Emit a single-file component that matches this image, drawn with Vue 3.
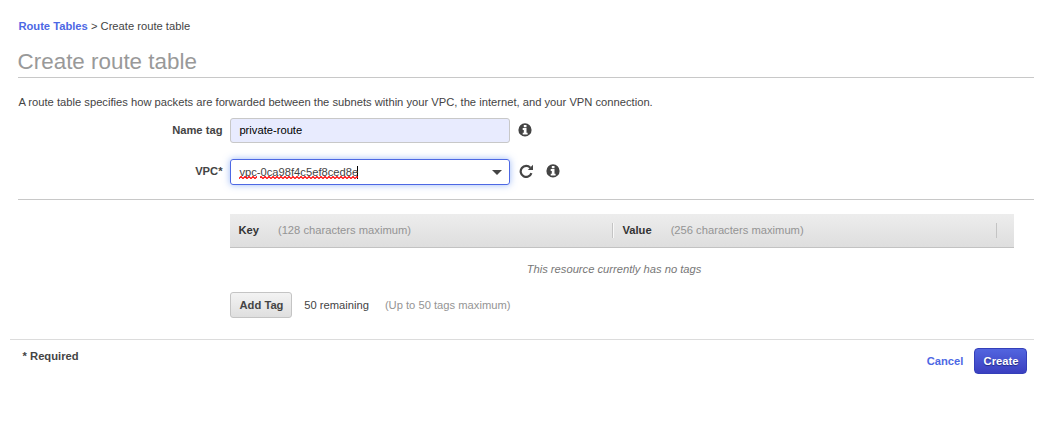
<script setup>
const columns = [
  { name: 'Key', hint: '(128 characters maximum)' },
  { name: 'Value', hint: '(256 characters maximum)' },
]
const infoPath =
  'M7 0.3A6.6 6.6 0 1 0 7 13.5A6.6 6.6 0 1 0 7 0.3ZM5.8 2h2.7v2.2H5.8zM4.7 5.1h3.8v4.6h1.1v1.8H4.7V9.7h1.1V6.9H4.7z'
</script>

<template>
  <main class="page">
    <nav class="crumbs"><a class="link">Route Tables</a> &gt; Create route table</nav>
    <h1 class="title">Create route table</h1>
    <p class="intro">
      A route table specifies how packets are forwarded between the subnets within your VPC, the
      internet, and your VPN connection.
    </p>

    <div class="row name-row">
      <label class="label">Name tag</label>
      <div class="field filled">private-route</div>
      <svg class="icon" viewBox="0 0 14 14"><path :d="infoPath" fill-rule="evenodd" /></svg>
    </div>
    <div class="row vpc-row">
      <label class="label">VPC*</label>
      <div class="field focused">
        <span class="typed">
          vpc-0ca98f4c5ef8ced8e
          <svg class="squiggle" width="119" height="3" viewBox="0 0 119 3">
            <defs>
              <pattern id="wave" width="4" height="3" patternUnits="userSpaceOnUse">
                <path d="M-1 1.5L0 2.5L2 0.5L4 2.5L5 1.5" />
              </pattern>
            </defs>
            <rect width="18" height="3" fill="url(#wave)" />
            <rect x="21" width="98" height="3" fill="url(#wave)" />
          </svg>
        </span>
        <i class="caret"></i>
        <i class="arrow"></i>
      </div>
      <svg class="icon refresh" viewBox="0 0 14 14">
        <path class="arc" d="M11.3 3.8A5.5 5.5 0 1 0 12.4 9.2" />
        <path d="M14 0.8V6H8.8z" />
      </svg>
      <svg class="icon" viewBox="0 0 14 14"><path :d="infoPath" fill-rule="evenodd" /></svg>
    </div>

    <section class="tags">
      <div class="thead">
        <div v-for="c in columns" :key="c.name" class="th">
          <b>{{ c.name }}</b><span class="muted">{{ c.hint }}</span>
        </div>
      </div>
      <p class="empty">This resource currently has no tags</p>
      <div class="add">
        <button class="btn">Add Tag</button>
        <span class="remaining">50 remaining</span>
        <span class="muted">(Up to 50 tags maximum)</span>
      </div>
    </section>

    <footer class="footer">
      <b class="required">* Required</b>
      <a class="link cancel">Cancel</a>
      <button class="btn primary">Create</button>
    </footer>
  </main>
</template>

<style>
body {
  margin: 0;
  background: #fff;
}
</style>

<style scoped>
.page {
  box-sizing: border-box;
  width: 1061px;
  height: 423px;
  padding: 19px 27px 0 18px;
  font: 11.2px/14px "Liberation Sans", Arial, sans-serif;
  color: #444;
  overflow: hidden;
}
.link {
  color: #4d68e4;
  font-weight: bold;
}
.crumbs {
  height: 14px;
  padding-left: 0.4px;
}
.title {
  box-sizing: border-box;
  height: 45px;
  margin: 0;
  padding-top: 15px;
  border-bottom: 1px solid #c8c8c8;
  font-size: 22.4px;
  line-height: 28px;
  font-weight: normal;
  text-indent: -0.4px;
  color: #999;
}
.intro {
  margin: 17px 0 9px;
  padding-left: 0.4px;
}
.row {
  display: flex;
  align-items: center;
}
.name-row {
  height: 25px;
}
.vpc-row {
  height: 26px;
  padding: 16px 0 14px;
  border-bottom: 1px solid #c8c8c8;
}
.label {
  width: 204.5px;
  margin-right: 7.5px;
  padding-bottom: 2px;
  text-align: right;
  font-weight: bold;
}
.field {
  box-sizing: border-box;
  display: flex;
  align-items: center;
  width: 280px;
  height: 25px;
  padding: 0 7px 0 8.4px;
  border: 1px solid #c8c8c8;
  border-radius: 3px;
}
.filled {
  padding-bottom: 1px;
  background: #e8ebfe;
  color: #000;
}
.focused {
  height: 26px;
  border-color: #4d68e4;
  box-shadow: 0 0 7px rgba(77, 130, 240, 0.55);
}
.typed {
  position: relative;
}
.squiggle {
  position: absolute;
  left: 0;
  bottom: 0;
}
.squiggle path {
  fill: none;
  stroke: #f00;
  stroke-width: 1.2;
}
.caret {
  width: 1px;
  height: 13px;
  margin-left: -1px;
  background: #000;
}
.arrow {
  margin-left: auto;
  border: 5px solid transparent;
  border-top-color: #444;
  border-bottom: 0;
}
.icon {
  width: 14px;
  height: 14px;
  margin: 0 0 1px 8px;
  fill: #444;
}
.vpc-row .icon {
  margin-bottom: 2px;
}
.vpc-row .refresh {
  margin: 0 5.5px 2px 8.5px;
}
.arc {
  fill: none;
  stroke: #444;
  stroke-width: 2.2;
}
.tags {
  width: 784px;
  margin: 14px 0 0 212px;
}
.thead {
  box-sizing: border-box;
  display: flex;
  align-items: center;
  height: 34px;
  border-bottom: 1px solid #c2c2c2;
  background: linear-gradient(#ededed, #dedede);
}
.th {
  box-sizing: border-box;
  width: 384px;
  height: 15px;
  padding-left: 9.4px;
  border-right: 1px solid #c4c4c4;
}
.th:first-child {
  width: 383px;
  padding-left: 8.4px;
  box-shadow: 1px 0 #f8f8f8;
}
.th b {
  color: #333;
  margin-right: 19px;
}
.muted {
  color: #949494;
}
.empty {
  width: 768px;
  margin: 14px 0 16px;
  text-align: center;
  font-style: italic;
  color: #777;
}
.add {
  display: flex;
  align-items: center;
  height: 26px;
}
.btn {
  box-sizing: border-box;
  width: 62px;
  height: 26px;
  padding: 0 0 0 1px;
  border: 1px solid #c4c4c4;
  border-radius: 3px;
  background: linear-gradient(#f3f3f3, #dfdfdf);
  color: #444;
  font: bold 11.2px/14px "Liberation Sans", Arial, sans-serif;
}
.remaining {
  margin: 0 16px 0 12.2px;
}
.footer {
  display: flex;
  height: 36px;
  margin: 21px 0 0 -8px;
  border-top: 1px solid #dcdcdc;
}
.required {
  margin: 9px auto 0 12.6px;
}
.cancel {
  margin: 14px 10.6px 0 0;
}
.primary {
  width: 53px;
  margin: 8px 7px 0 0;
  border-color: #343fb9;
  border-radius: 4px;
  background: linear-gradient(#5265df, #3b3fc0);
  color: #fff;
  text-shadow: 0 1px 1px #222a80;
}
</style>
